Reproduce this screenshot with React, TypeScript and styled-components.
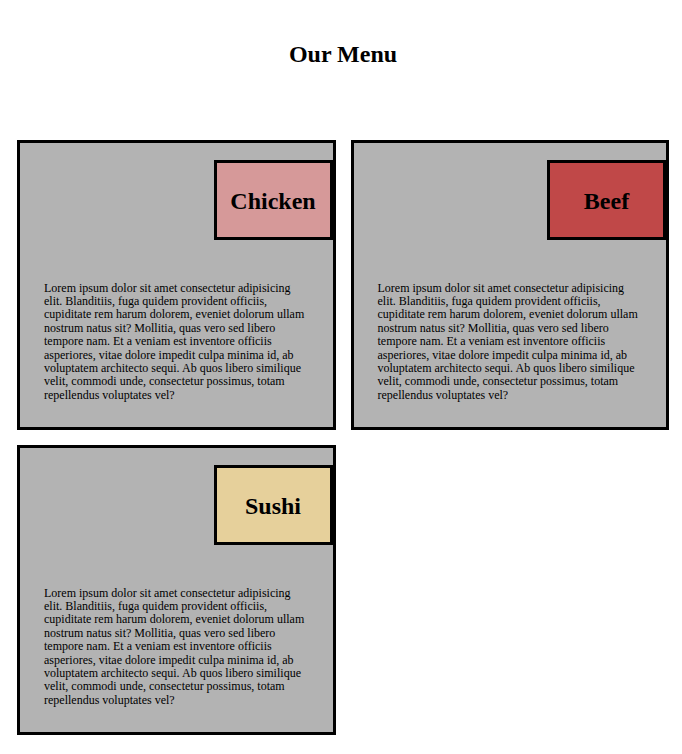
import React from "react";
import styled, { createGlobalStyle } from "styled-components";

const Global = createGlobalStyle`
  html, body { margin: 0; padding: 0; background: #ffffff; }
  body { font-family: "Liberation Serif", "Times New Roman", serif; color: #000; }
`;

const Page = styled.main`
  padding: 41px 13px 20px 17px;
`;

const Title = styled.h1`
  margin: 0 0 71px;
  text-align: center;
  font-size: 24px;
  font-weight: bold;
  line-height: 27.6px;
`;

const Grid = styled.section`
  display: grid;
  grid-template-columns: 1fr 1fr;
  column-gap: 15px;
  row-gap: 15px;
`;

const Card = styled.article`
  box-sizing: border-box;
  height: 290px;
  border: 3px solid #000;
  background: #b3b3b3;
  display: flex;
  flex-direction: column;
`;

const Label = styled.h2<{ $bg: string }>`
  box-sizing: border-box;
  align-self: flex-end;
  width: 119px;
  height: 80px;
  margin: 17px 0 0;
  padding-top: 3px;
  border: 3px solid #000;
  background: ${(p) => p.$bg};
  display: flex;
  align-items: center;
  justify-content: center;
  font-size: 24px;
  font-weight: bold;
`;

const Text = styled.p`
  margin: 42px 0 0;
  padding: 0 24px;
  font-size: 12px;
  line-height: 13.4px;
`;

const LOREM =
  "Lorem ipsum dolor sit amet consectetur adipisicing elit. Blanditiis, fuga quidem provident officiis, cupiditate rem harum dolorem, eveniet dolorum ullam nostrum natus sit? Mollitia, quas vero sed libero tempore nam. Et a veniam est inventore officiis asperiores, vitae dolore impedit culpa minima id, ab voluptatem architecto sequi. Ab quos libero similique velit, commodi unde, consectetur possimus, totam repellendus voluptates vel?";

const items = [
  { name: "Chicken", color: "#d69999" },
  { name: "Beef", color: "#c04848" },
  { name: "Sushi", color: "#e6d09b" },
];

export default function App() {
  return (
    <>
      <Global />
      <Page>
        <Title>Our Menu</Title>
        <Grid>
          {items.map((it) => (
            <Card key={it.name}>
              <Label $bg={it.color}>{it.name}</Label>
              <Text>{LOREM}</Text>
            </Card>
          ))}
        </Grid>
      </Page>
    </>
  );
}
